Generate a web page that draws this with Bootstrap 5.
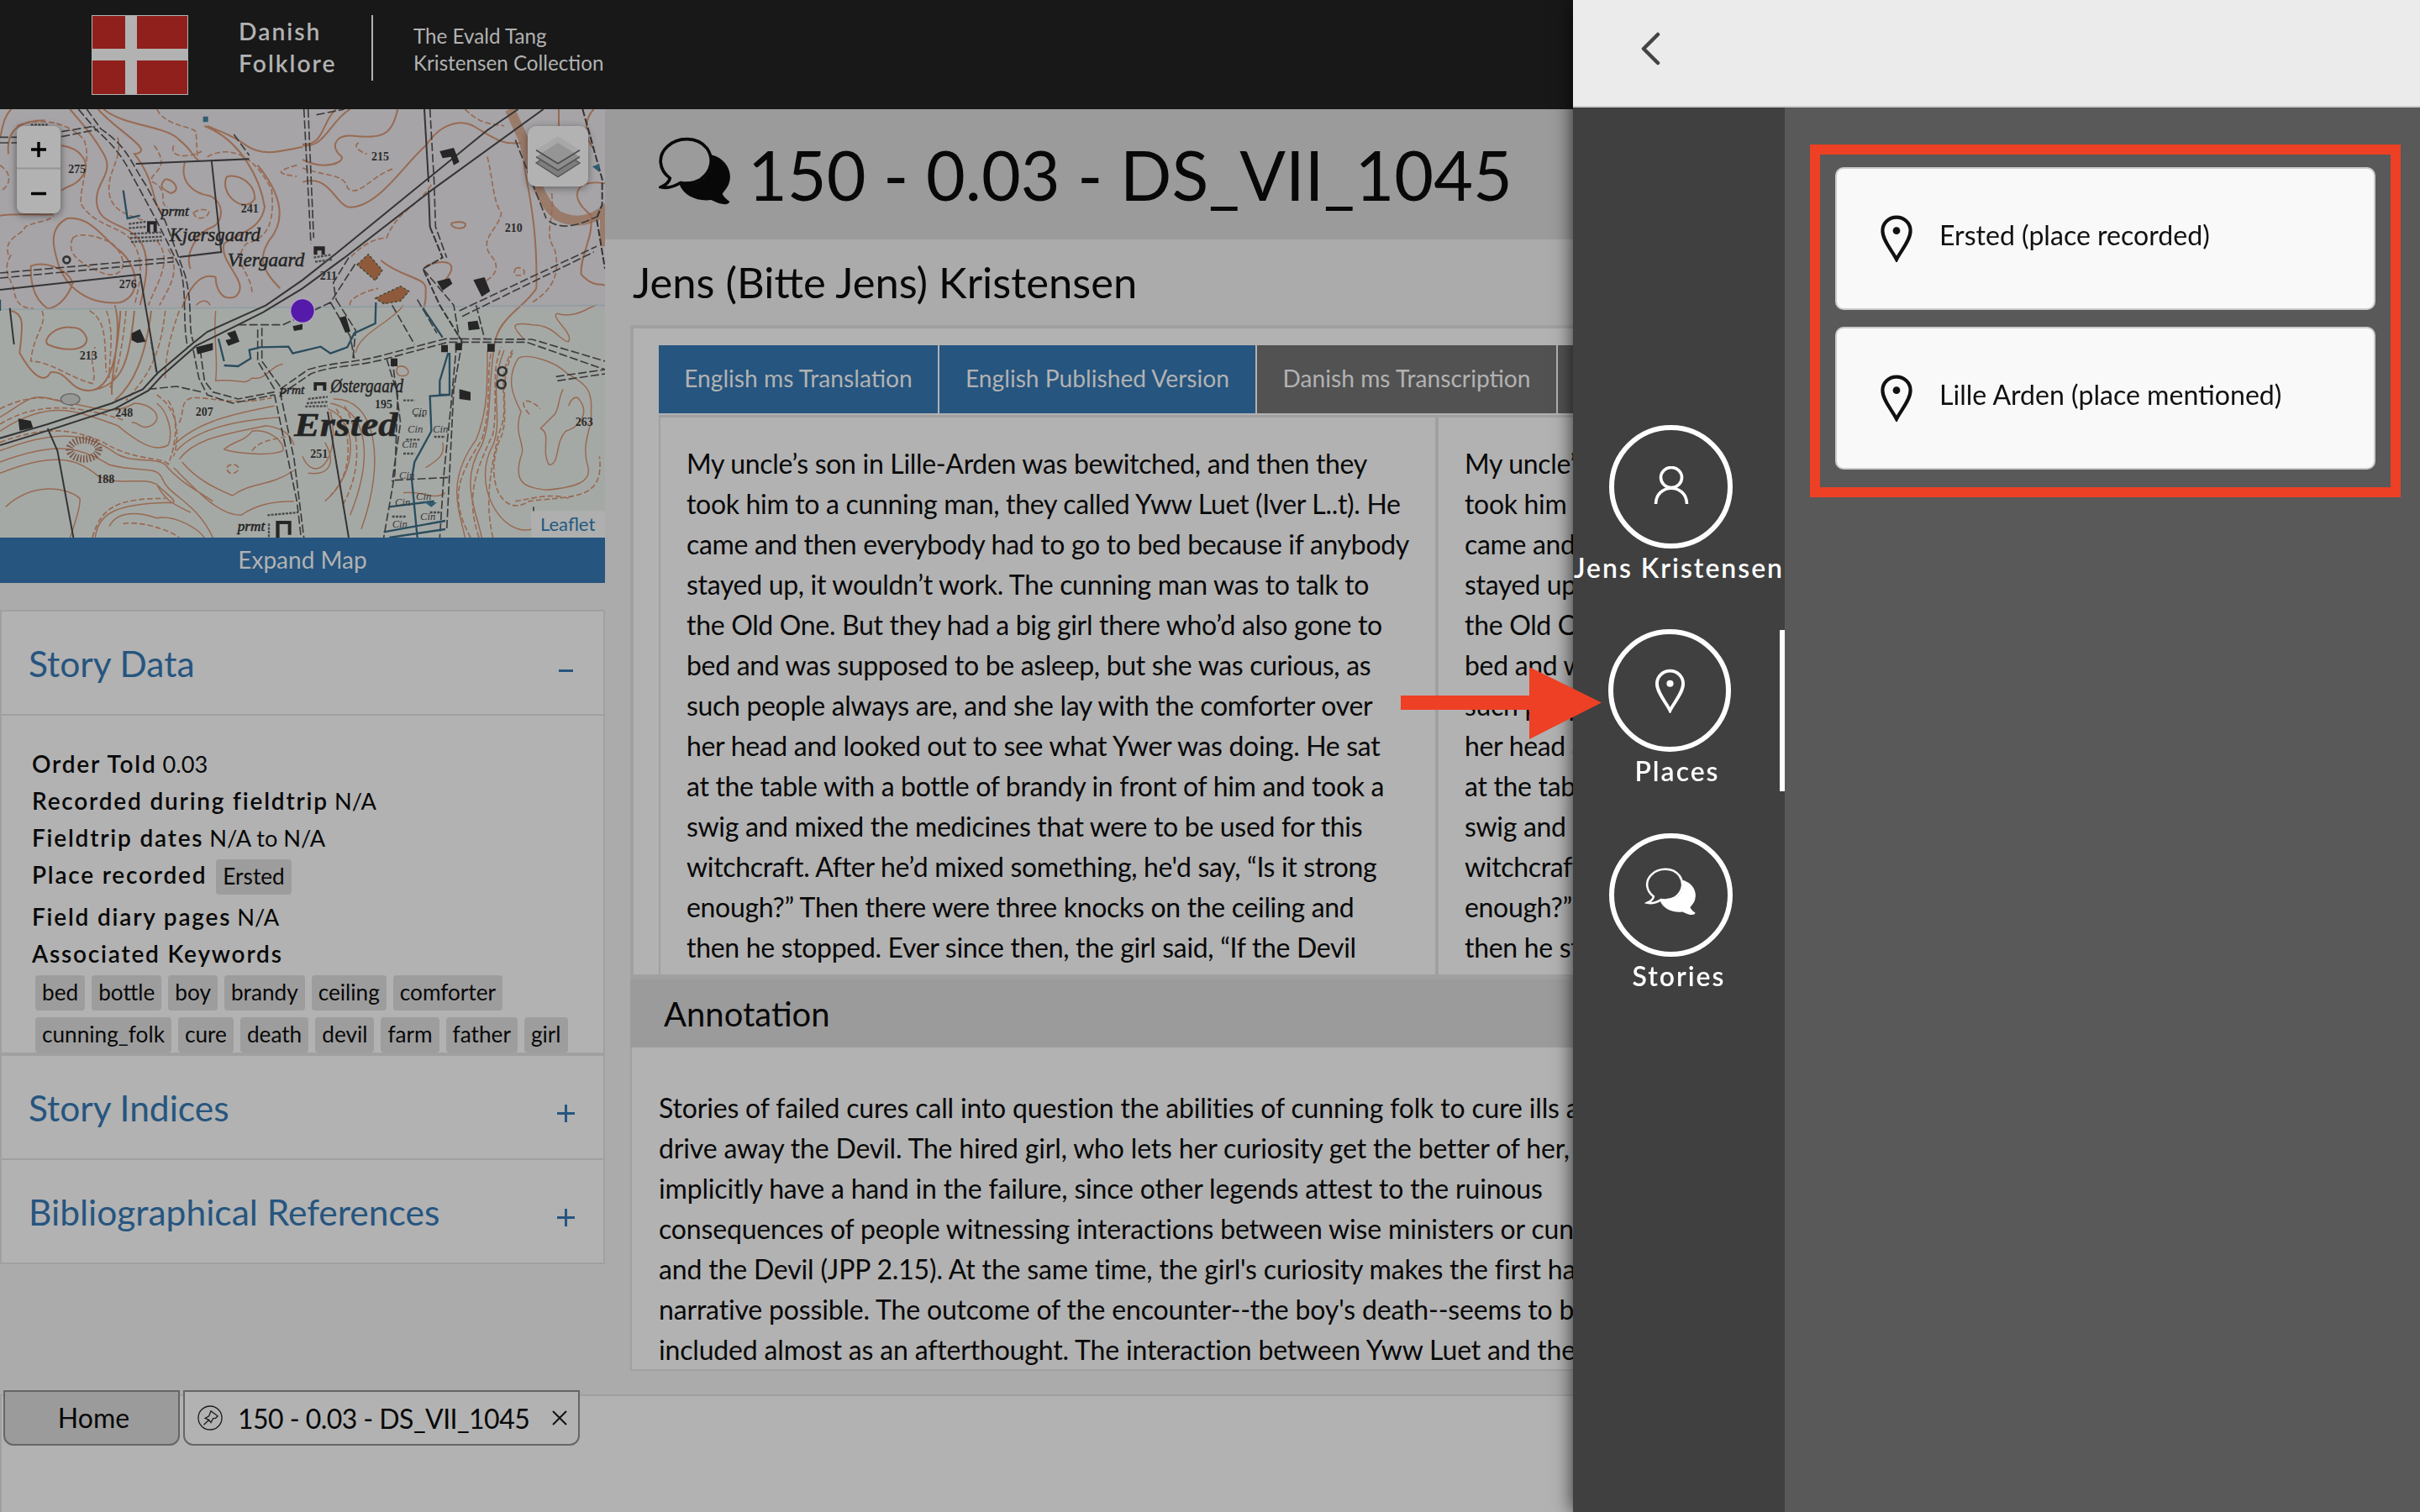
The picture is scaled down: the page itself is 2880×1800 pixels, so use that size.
<!DOCTYPE html>
<html lang="en">
<head>
<meta charset="utf-8">
<title>Danish Folklore</title>
<link href="https://cdn.jsdelivr.net/npm/bootstrap@5.3.0/dist/css/bootstrap.min.css" rel="stylesheet">
<style>
body{font-family:Lato,"Liberation Sans",sans-serif;font-size:32px;line-height:48px;color:#080808;background:#ababab;height:1800px;overflow:hidden;white-space:nowrap}
.ls{letter-spacing:2px;font-weight:600}
.topbar{height:130px;background:#181818;color:#b2b2b2}
.flag{width:115px;height:95px;margin:18px 60px 0 109px}
.brandname{font-size:28.300px;line-height:38px;padding-top:18px;width:158px}
.brandline{width:2px;height:78px;margin-top:18px;background:#b2b2b2}
.brandsub{font-size:24.200px;line-height:32px;margin-left:48px;padding-top:27px}
.workarea{height:1530px}
.leftcol{width:720px}
.mapbox{height:510px}
.expand{height:54px;background:#26557f;color:#b2b2b2;font-size:28px;line-height:52px}
.zoomctl{left:20px;top:20px;width:52px;height:104px;border-radius:8px;background:#b2b2b2;box-shadow:0 2px 10px rgba(0,0,0,.5)}
.layerctl{right:20px;top:20px;width:72px;height:72px;border-radius:10px;background:#b2b2b2;box-shadow:0 2px 10px rgba(0,0,0,.4)}
.leaf{right:0;bottom:0;width:88px;height:32px;background:rgba(178,178,178,.7);color:#1f5a80;font-size:22px;line-height:31px;padding-left:11px}
.panels{margin-top:32px;border:2px solid #a0a0a0;background:#b2b2b2}
.phead{height:122px;padding:0 33px 0 32px;color:#26557f;font-size:42.500px;line-height:124px}
.phead svg{margin-top:13px}
.pbody{border-top:2px solid #a0a0a0;border-bottom:4px solid #a0a0a0;height:407px;padding:35px 0 0 36px;font-size:27.200px;line-height:44px;overflow:hidden}
.pbody .ls{font-size:28px;letter-spacing:1.800px}
.pbody .fact{height:44px}
.pline{border-top:2px solid #a0a0a0;height:124px}
.chiprow{height:50px;margin-left:4px}
.chip{display:inline-block;background:#9d9d9d;border-radius:4px;font-size:26.200px;line-height:38px;height:42px;padding:1px 8px}
.titlebar{height:155px;background:#9b9b9b;padding:33px 0 0 64px;font-size:80.800px;line-height:89px}
.titlebar span{margin-left:19px}
.person{font-size:50.700px;line-height:60px;margin:21px 0 21px 33px}
.story{margin-left:30px;height:779px;border:4px solid #a0a0a0;border-bottom-width:6px;border-right:0;background:#b2b2b2;padding:20px 0 0 30px}
.stab{height:81px;background:#26557f;color:#b2b2b2;font-size:28.200px;line-height:79px;text-align:center;margin-right:2px}
.stab.off{background:#525252}
.scols{margin-top:2px;height:666px}
.scol{width:928px;border:2px solid #a0a0a0;border-width:3px 4px 0 2px;padding:31px 0 0 31px;flex:none;letter-spacing:-.32px}
.ahead{margin-left:30px;height:81px;background:#9b9b9b;padding-left:40px;font-size:40px;line-height:83px}
.abody{margin-left:30px;height:385px;border:2px solid #a0a0a0;border-top:0;background:#b2b2b2;padding:48px 0 0 32px;overflow:hidden;letter-spacing:-.17px}
.tabbar{height:140px;background:#b2b2b2;border:2px solid #a0a0a0;border-width:2px 0 0 2px;padding-left:2px;line-height:61px}
.wtab{height:66px;margin-top:-7px;border:2px solid #666;border-radius:0 0 12px 12px;background:#b2b2b2}
.wtab svg{flex:none}
.drawer.offcanvas{--bs-offcanvas-width:1008px;width:1008px;border:0;background:#595959;box-shadow:0 0 22px rgba(0,0,0,.75);color:#111;visibility:visible;transform:none;outline:0}
.dtop{height:128px;background:#ebebeb;border-bottom:2px solid #ccc;padding:38px 0 0 79px}
.rail{width:252px;background:#404040;color:#fff;padding-top:378px}
.ring{width:147px;height:147px;border:6px solid #fff;border-radius:50%;margin-left:43px}
.raillabel{font-size:31.900px;line-height:46px;text-align:center}
.ritem{height:243px}
.ritem.chosen .ring{width:146px;height:146px;margin-left:42px}
.ritem.chosen .raillabel{padding-right:4px}
.picked{width:6px;height:192px;right:0;top:1px;background:#fff}
.callout{width:703px;height:420px;margin:44px 0 0 30px;border:12px solid #ed4024;padding:15px 18px}
.place{height:170px;border:2px solid #ccc;border-radius:10px;background:#f9f9f9;margin-bottom:20px;padding-left:50px;font-size:32.100px}
.place span{margin-left:30px;padding-bottom:8px}
.arrow{left:1667px;top:794px;z-index:2000}
</style>
<script src="https://cdn.jsdelivr.net/npm/bootstrap@5.3.0/dist/js/bootstrap.bundle.min.js"></script>
</head>
<body>
<svg width="0" height="0" class="position-absolute">
<symbol id="bubbles" viewBox="40 40 262 250"><path d="M80 188C40 158 35 108 70 75C108 38 178 38 212 80C240 120 228 165 190 192C165 207 138 207 118 204C100 215 75 226 48 220C65 212 78 200 80 188Z" fill="none" stroke="currentColor" stroke-width="11"/><path d="M228 104C280 116 306 165 292 205C286 225 270 238 268 245C275 258 285 266 294 272C290 286 265 285 228 266C180 272 130 255 112 206C160 215 200 200 218 170C232 148 234 125 228 104Z" fill="currentColor"/></symbol>
<symbol id="pin" viewBox="0 0 38 54"><path d="M19 51C14 41 3 29 3 18a16 15.500 0 0 1 32 0C35 29 24 41 19 51Z" fill="none" stroke="currentColor" stroke-width="4"/><circle cx="19" cy="18" r="4.200" fill="currentColor"/></symbol>
</svg>
<header class="topbar d-flex">
<svg class="flag" viewBox="0 0 115 95"><rect width="115" height="95" fill="#b2b2b2"/><path d="M1 1h39v39H1zM54 1h60v39H54zM1 54h39v40H1zM54 54h60v40H54z" fill="#90201c"/></svg>
<div class="brandname ls">Danish<br>Folklore</div>
<div class="brandline"></div>
<div class="brandsub">The Evald Tang<br>Kristensen Collection</div>
</header>
<main class="workarea d-flex">
<aside class="leftcol flex-shrink-0">
<div class="mapbox position-relative overflow-hidden">
<svg width="720" height="510" viewBox="0 0 2160 1530" fill="none">
<rect width="2160" height="1530" fill="#a6a4a7"/><rect y="710" width="2160" height="820" fill="#a5a9a6"/>
<g stroke="#986a52" stroke-width="6">
<path d="M30 160C20 60 90 40 160 40M0 100C10 70 10 30 40 0M220 130C290 140 320 190 300 230C270 280 240 270 220 290M0 380C60 370 160 380 190 375M250 0C300 60 330 90 370 160C410 230 340 260 345 330C350 420 450 400 500 470C540 530 520 620 500 700M350 0C420 80 560 150 480 160C560 260 540 340 580 370M370 0C440 60 600 60 640 110C680 140 690 170 710 185M660 190C640 260 690 300 750 310C800 330 800 400 760 420C700 440 660 520 680 570M240 390C160 430 200 520 210 560C250 660 340 700 430 690C520 660 480 540 420 500C370 460 320 380 240 390ZM110 560C160 540 240 570 260 620C240 680 200 710 170 712C110 670 110 600 110 560ZM740 60C790 80 840 100 880 130C940 170 1000 150 1080 135M730 60C860 110 930 250 945 350C930 430 860 440 800 480C780 550 900 620 840 670C780 690 770 620 770 600C710 580 670 650 650 710M920 200C1010 310 1020 400 960 470C930 520 920 560 1000 640M810 240C780 300 870 380 910 320C910 270 860 230 810 240M590 250C560 280 590 290 610 300C650 290 620 250 590 250M1080 130C1160 140 1180 40 1250 0M1080 260C1180 230 1200 350 1250 350C1350 350 1440 200 1520 130C1580 40 1650 40 1690 60C1760 100 1790 130 1860 120M1080 180C1160 220 1230 190 1220 170C1180 140 1190 90 1260 95C1380 110 1400 80 1420 0M1080 125C1160 130 1150 40 1200 0M1870 190C1880 270 1920 400 1915 640C1880 700 1790 740 1770 820M2120 0C2080 40 2090 110 2120 140M1995 0V100M2160 265C2060 250 2040 300 2080 350L2110 380C2120 460 2070 520 2075 590C2120 640 2150 620 2160 630M1610 410C1620 400 1660 400 1662 412C1660 430 1620 430 1610 410M1360 540C1430 600 1520 600 1520 640C1520 680 1520 690 1510 720M1520 560C1600 530 1640 550 1590 610M260 780C200 770 150 820 170 840C240 870 310 860 310 820C300 790 280 780 260 780M40 720C90 730 80 780 70 870C120 960 160 980 180 940C240 930 250 1010 320 1005C400 1000 420 870 430 720M410 700C440 800 390 960 400 1020M480 720C460 900 440 990 320 1005M540 720C520 880 480 980 410 1040"/>
<path stroke-width="4.500" d="M0 1100C100 1040 110 1010 200 1040C330 1060 400 1100 480 1050C540 1050 590 1100 540 1130C500 1150 490 1110 470 1120M0 1150C180 1030 280 1080 420 1130C480 1180 550 1230 600 1200C620 1160 600 1080 560 1050M0 1220C180 1150 300 1150 400 1220C460 1270 560 1240 590 1270C640 1330 700 1360 760 1400M0 1260C190 1190 280 1200 390 1270C500 1300 560 1270 580 1320C600 1380 700 1400 760 1530M0 1300C200 1220 280 1250 350 1310C430 1350 500 1310 560 1340C590 1400 620 1410 680 1440M20 1420C120 1330 240 1350 285 1390C290 1420 260 1500 250 1530M340 1530C350 1440 420 1410 600 1405C650 1410 600 1380 560 1340M390 1490C420 1430 500 1440 560 1460C620 1450 700 1490 730 1530M640 1250C700 1170 820 1160 950 1130C1020 1140 1040 1170 1050 1200M620 1200C700 1120 820 1090 980 1060M630 1220C700 1140 850 1110 1000 1100M650 1260C700 1320 760 1350 830 1380C900 1330 960 1350 1050 1290M620 1280C700 1360 780 1450 860 1450C920 1410 980 1400 1050 1400M800 1215C840 1180 870 1190 900 1150C960 1140 1020 1190 1010 1220C970 1240 850 1230 800 1215Z"/>
<path stroke-width="4.500" d="M770 720C760 820 780 880 770 970C850 960 870 990 900 960C950 970 960 920 1010 910M700 700C720 680 740 680 750 700M1100 1300C1180 1310 1200 1260 1160 1190M1080 1240C1120 1340 1220 1260 1180 1080M1170 1070C1280 1110 1280 1300 1160 1400M1180 1050C1320 1080 1330 1250 1250 1450M1190 1035C1340 1030 1380 1250 1290 1500M1270 870C1280 800 1400 760 1440 700M1420 920C1450 910 1470 940 1450 950C1420 960 1410 940 1420 920M1770 820C1740 960 1760 1100 1720 1200C1640 1330 1700 1430 1720 1530M1740 860C1740 1000 1740 1080 1700 1180C1590 1330 1640 1430 1660 1530M1800 860C1740 1010 1800 1100 1760 1200C1680 1340 1790 1530 1900 1500M1850 890C1800 970 1840 1040 1860 1080C1830 1160 1880 1200 1860 1240C1830 1340 1880 1350 1950 1360C2060 1350 2110 1330 2100 1280C2070 1190 2120 1130 2110 1080C2120 980 2060 970 2020 940C1980 900 1880 870 1850 890M2010 1000C1990 1040 2000 1060 1980 1090L1930 1140C1970 1160 1930 1220 1960 1270C2000 1270 1980 1190 2020 1150C2080 1130 2100 1080 2070 1040C2060 1020 2040 1030 2030 1060M1870 820C1820 770 1830 760 1900 770C1980 770 2000 830 2030 830C2050 800 1960 740 1990 730C2060 750 2110 700 2130 700M1440 1370C1500 1360 1550 1400 1590 1370M1520 1280C1570 1250 1590 1230 1580 1190"/>
</g>
<g stroke="#986a52" stroke-width="5" stroke-dasharray="20 9">
<path d="M0 200C60 240 20 290 0 290M60 60C160 20 260 60 300 110C330 180 280 290 290 340C340 420 440 420 470 470C520 540 500 620 480 700M560 0C590 60 680 60 700 80L705 180M420 100C440 180 380 220 390 300C400 370 470 380 520 400M550 130C620 220 520 230 545 260C610 290 560 340 600 350M260 460C230 520 300 560 380 590C460 600 450 520 400 480C350 450 280 440 260 460ZM30 520C10 460 80 450 90 420C130 400 180 400 190 380M40 520C0 580 50 620 50 650C60 700 80 710 120 712M620 130C600 180 690 170 720 150M740 170C830 120 920 180 970 290C980 400 960 460 880 480C820 550 900 580 900 660M1060 200C990 220 980 230 1060 240M690 370C720 350 750 360 745 370C740 390 700 400 690 370M1280 120C1260 130 1280 150 1310 160M1080 210C1160 240 1230 230 1240 280C1280 320 1320 240 1410 210M1660 0C1720 60 1760 50 1800 60M1740 170C1760 250 1760 330 1790 370C1780 430 1710 460 1750 520C1790 560 1770 600 1720 620M1970 300C1980 400 1940 440 1980 500C2000 580 1980 640 1900 690M1540 270C1480 360 1420 360 1380 460C1340 460 1300 480 1250 530M1840 570C1850 560 1880 570 1870 590C1840 600 1830 590 1840 570M150 720C170 770 120 800 110 900C180 900 250 960 330 980C350 940 310 890 340 850M320 720C390 760 370 860 380 940M380 720C410 800 390 880 390 960M450 720C440 830 420 950 390 1000M590 720C570 900 520 960 450 1040M640 720C600 830 590 900 590 960M560 470C620 540 560 620 530 700M600 500C650 580 600 640 570 700"/>
<path d="M0 1070C100 1020 180 1020 260 1060M0 1190C160 1130 260 1140 370 1190C480 1260 590 1240 600 1270M0 1125C120 1050 260 1050 440 1110M330 1530C360 1420 420 1390 590 1390M440 1480C500 1470 600 1500 640 1530M600 1040C640 1090 630 1200 600 1270M560 1020C620 1060 650 1140 620 1240M640 1120C660 1080 640 1040 690 1030C760 1030 850 1060 970 1030M900 1220C920 1190 960 1180 1020 1170M810 1280C820 1260 860 1270 850 1290C830 1310 810 1300 810 1280M1680 1530C1600 1380 1640 1310 1720 1180C1760 1050 1730 950 1760 840M1710 1530C1660 1380 1700 1290 1760 1160C1780 1040 1750 940 1790 850M1760 1530C1730 1400 1750 1300 1780 1160C1830 1050 1760 980 1830 860M1840 1400C1900 1390 1970 1370 2030 1390M1830 870C1770 1000 1830 1100 1780 1190C1730 1340 1800 1460 1890 1400C2040 1380 2160 1400 2140 1240M1890 1090C1840 1030 1890 1030 1930 1070M1200 1070C1260 1160 1260 1300 1180 1380M1230 1060C1290 1160 1290 1300 1220 1420M1250 700C1240 680 1300 650 1350 640"/>
</g>
<path d="M1820 0L1870 110C1900 240 1930 330 1990 380C2050 410 2110 400 2160 360V490" stroke="#966a50" stroke-width="36" opacity=".7"/>
<path d="M1275 555L1315 518L1365 575L1340 612ZM1340 675L1430 632L1460 650L1430 685L1370 695Z" fill="#8f5a3c" stroke="#443" stroke-width="4" stroke-dasharray="10 6"/>
<path d="M0 715L2160 700" stroke="#8a9ca0" stroke-width="4"/>
<g stroke="#343434" stroke-width="6">
<path d="M0 1175L170 1125L400 1050L510 1000L560 945L690 835L740 795L950 700L1080 610L1200 515L1740 75L1850 0M0 1200L180 1145L410 1070L530 1005L580 950L700 845L940 725L1080 640L1230 530L1540 290L1940 0M485 195L890 178M755 180L790 510L640 528M500 590L560 940M0 645L500 590M170 1140L205 1220L262 1530M35 710L50 840M1170 1080L1245 1530M1515 0L1530 260M1530 290L1535 420"/>
<path d="M1535 420L1580 530L1510 570L1570 700L1650 830M2080 0L2150 250V340L2130 390L2160 570" stroke-dasharray="26 8"/>
</g>
<g stroke="#3c3c3c" stroke-width="5" stroke-dasharray="30 10">
<path d="M280 0L340 70C440 160 450 200 490 270L560 400L640 560C670 640 650 760 670 850M310 0L360 70C460 140 460 180 520 270L590 400L660 590C690 700 670 780 690 830M0 585L620 530M0 603L620 545M0 100H60M0 120H60M220 80L340 60M220 98L350 72M1085 0L1110 480M1100 0L1120 460M1535 0L1550 260L1555 420L1595 530M690 860L710 960L740 1020L830 1050L980 1020M715 860L730 970L760 1010L850 1035L980 1010M530 1000L630 990L720 1010M980 1020L1060 1400L1075 1530M1000 1010L1050 1250L1085 1530M980 1000L920 900V780M1000 990L935 900V780M850 770L1010 770L1180 690L1270 550M1000 1000L1100 930C1200 900 1260 910 1400 870L1590 820L1900 822L2160 900M1000 1020L1110 945C1200 910 1270 925 1420 880L1600 832H1880L2160 930M1180 690L1250 810L1265 890M1200 680L1270 790L1260 890M1245 530L1190 620L1200 680M1650 830L1620 1000L1595 1500M1630 840L1610 1060L1585 1300L1570 1530M1640 720L2130 490M1650 740L2120 510M1700 700L1730 820M1510 570L1620 700L1640 820M1380 890L1420 1020L1410 1300L1370 1530M1400 890L1430 1120L1400 1330M1985 955L2160 930M1990 970L2160 945M1410 1325L1600 1315M1490 680L1560 800M1400 700L1480 840M1130 20L1230 0M1840 110L1950 390M1960 400C2020 440 2090 400 2130 385M835 90L890 165M540 830L560 950M1905 1440V1420"/>
</g>
<path d="M440 290L455 390L500 380M800 915L850 918L895 890L890 860L930 850L1030 848L1045 872L1145 848L1180 872L1240 850L1265 800L1340 765L1342 690M1510 710L1580 815M1600 870L1570 970V1020H1605V870M1605 1020L1535 1025L1540 1150L1480 1260L1470 1320L1490 1530M1390 1420L1550 1400M1370 1510L1590 1470M1390 1530L1590 1500M0 680V720M780 820L800 900" stroke="#2a4d5e" stroke-width="7"/>
<path d="M525 400h35v40h-12v-28h-12v28h-11zM470 800l30-15 20 45-30 5-20-10zM810 800l30-10 15 40-40 15-10-20 20-5zM700 850l60-15v25l-55 15zM1120 490h40v30h-12v-15h-15v15h-13zM1570 150l50-12 20 50-20 12-10-30-30 5zM1560 615l45-12 10 20-35 25zM1690 610l40-10 20 50-30 20zM1670 760l35-5 8 30-40 5zM1575 842h24v26h-24zM1625 835h24v26h-24zM1740 838h26v28h-26zM1210 745l25-6 16 55-18 4zM1640 1000l40 10v30l-40-5zM985 1470h55v50h-12v-38h-30v48h-13zM1120 975h45v30h-12v-18h-22v18h-11zM65 1105l45 8 8 25-48 10zM1395 890h24v28h-24zM1045 775l35-8v20l-30 5z" fill="#262626"/>
<path d="M460 410l60-8M460 425l60-5M465 445l110-5M465 460l115-5M468 474l110-6M1100 1035l70-8M1095 1050l75-5M1090 1062l80-2M1120 530l60-10M1125 545l60-8M955 1450l110-10M960 1480v50M1440 1040h40M1450 1180h50M1440 1230h40M1550 1170h40M1535 1440h40M1400 1455h50M1480 1095h40M110 55h60" stroke="#4a4a4a" stroke-width="7" stroke-dasharray="9 4"/>
<ellipse cx="251" cy="1036" rx="34" ry="20" fill="#969896" stroke="#666" stroke-width="4"/>
<ellipse cx="300" cy="1215" rx="52" ry="34" stroke="#7a5848" stroke-width="26" stroke-dasharray="5 6"/>
<g stroke="#333" stroke-width="8"><circle cx="238" cy="538" r="12"/><circle cx="1793" cy="936" r="15"/><circle cx="1790" cy="982" r="15"/></g>
<path d="M725 26h18v20h-18zM1510 1400l50 5-20 16zM2115 205l25-10v30z" fill="#2f5c70"/>
<g fill="#242424" stroke="#242424" stroke-width="1.500" font-family="Liberation Serif,serif" font-style="italic" font-size="68">
<text x="605" y="470" textLength="325" lengthAdjust="spacingAndGlyphs">Kjærsgaard</text><text x="812" y="562" textLength="275" lengthAdjust="spacingAndGlyphs">Viergaard</text><text x="1180" y="1012" textLength="260" lengthAdjust="spacingAndGlyphs" dx="0">Østergaard</text>
<text x="575" y="380" font-size="48" textLength="100" lengthAdjust="spacingAndGlyphs">prmt</text><text x="848" y="1506" font-size="48" textLength="98" lengthAdjust="spacingAndGlyphs">prmt</text><text x="1000" y="1018" font-size="46">prmt</text>
<text x="1050" y="1166" font-size="122" font-weight="bold" textLength="370" lengthAdjust="spacingAndGlyphs">Ersted</text></g>
<g fill="#2c2c2c" font-family="Liberation Serif,serif" font-weight="bold" font-size="42"><text x="244" y="228">275</text><text x="860" y="370">241</text><text x="425" y="640">276</text><text x="284" y="893">213</text><text x="412" y="1097">248</text><text x="698" y="1096">207</text><text x="346" y="1336">188</text><text x="1326" y="184">215</text><text x="1802" y="438">210</text><text x="1142" y="610">211</text><text x="1338" y="1068">195</text><text x="1108" y="1246">251</text><text x="2054" y="1132">263</text></g>
<g font-family="Liberation Serif,serif" font-style="italic" font-size="38" fill="#3a3a3a"><text x="1470" y="1092">Cin</text><text x="1455" y="1155">Cin</text><text x="1545" y="1155">Cin</text><text x="1435" y="1210">Cin</text><text x="1425" y="1320">Cin</text><text x="1485" y="1395">Cin</text><text x="1410" y="1415">Cin</text><text x="1500" y="1468">Cin</text><text x="1400" y="1495">Cin</text></g>
<circle cx="1080" cy="720" r="43" fill="#551aa9" stroke="#b5a8c4" stroke-width="4"/>
</svg>
<div class="zoomctl position-absolute"><svg width="52" height="104" viewBox="0 0 52 104" class="d-block"><path d="M0 50.500h52" stroke="#949494" stroke-width="2"/><path d="M17 28h18M26 19v18M17 80.500h18" stroke="#000" stroke-width="3.400"/></svg></div>
<div class="layerctl position-absolute"><svg width="72" height="72" viewBox="804 60 216 216" class="d-block"><path d="M834 192l78 50 78-50-78-50z" fill="#7e7e7e" stroke="#555" stroke-width="4"/><path d="M834 170l78 47 78-47-78-50z" fill="#8d8d8d"/><path d="M834 170l78 48 78-48" fill="none" stroke="#555" stroke-width="5"/><path d="M912 96l78 50-78 48-78-48z" fill="#a8a8a8"/><path d="M912 120l58 36-58 37-58-37z" fill="#959595"/><path d="M834 146l78 48 78-48" fill="none" stroke="#4c4c4c" stroke-width="5"/></svg></div>
<div class="leaf position-absolute">Leaflet</div>
</div>
<div class="expand text-center">Expand Map</div>
<div class="panels">
<div class="phead d-flex justify-content-between"><span>Story Data</span><svg width="22" height="100"><path d="M2 57.500h17" stroke="#26557f" stroke-width="3"/></svg></div>
<div class="pbody">
<div class="fact"><span class="ls">Order Told</span> 0.03</div>
<div class="fact"><span class="ls">Recorded during fieldtrip</span> N/A</div>
<div class="fact"><span class="ls">Fieldtrip dates</span> N/A to N/A</div>
<div class="d-flex" style="height:50px"><span class="ls">Place recorded</span><span class="chip mt-1" style="margin-left:11px">Ersted</span></div>
<div class="fact"><span class="ls">Field diary pages</span> N/A</div>
<div class="fact mb-1"><span class="ls">Associated Keywords</span></div>
<div class="chiprow d-flex gap-2"><span class="chip">bed</span><span class="chip">bottle</span><span class="chip">boy</span><span class="chip">brandy</span><span class="chip">ceiling</span><span class="chip">comforter</span></div>
<div class="chiprow d-flex gap-2"><span class="chip">cunning_folk</span><span class="chip">cure</span><span class="chip">death</span><span class="chip">devil</span><span class="chip">farm</span><span class="chip">father</span><span class="chip">girl</span></div>
</div>
<div class="phead d-flex justify-content-between"><span>Story Indices</span><svg width="22" height="100"><path d="M0 55.500h21M10.500 45v21" stroke="#26557f" stroke-width="3"/></svg></div>
<div class="phead pline d-flex justify-content-between"><span>Bibliographical References</span><svg width="22" height="100"><path d="M0 55.500h21M10.500 45v21" stroke="#26557f" stroke-width="3"/></svg></div>
</div>
</aside>
<section class="flex-grow-1 overflow-hidden">
<div class="titlebar d-flex"><svg width="87" height="83"><use href="#bubbles"/></svg><span>150 - 0.03 - DS_VII_1045</span></div>
<div class="person">Jens (Bitte Jens) Kristensen</div>
<div class="story">
<div class="d-flex"><div class="stab" style="width:332px">English ms Translation</div><div class="stab" style="width:376px">English Published Version</div><div class="stab off" style="width:356px">Danish ms Transcription</div><div class="stab off" style="width:400px"></div></div>
<div class="scols d-flex">
<div class="scol">My uncle’s son in Lille-Arden was bewitched, and then they<br>took him to a cunning man, they called Yww Luet (Iver L..t). He<br>came and then everybody had to go to bed because if anybody<br>stayed up, it wouldn’t work. The cunning man was to talk to<br>the Old One. But they had a big girl there who’d also gone to<br>bed and was supposed to be asleep, but she was curious, as<br>such people always are, and she lay with the comforter over<br>her head and looked out to see what Ywer was doing. He sat<br>at the table with a bottle of brandy in front of him and took a<br>swig and mixed the medicines that were to be used for this<br>witchcraft. After he’d mixed something, he'd say, “Is it strong<br>enough?” Then there were three knocks on the ceiling and<br>then he stopped. Ever since then, the girl said, “If the Devil</div>
<div class="scol border-start-0">My uncle’s son in<br>took him to a<br>came and then<br>stayed up, it<br>the Old One. But<br>bed and was<br>such people<br>her head and<br>at the table<br>swig and mixed<br>witchcraft. After<br>enough?” Then<br>then he stopped.</div>
</div>
</div>
<div class="ahead">Annotation</div>
<div class="abody">Stories of failed cures call into question the abilities of cunning folk to cure ills and<br>drive away the Devil. The hired girl, who lets her curiosity get the better of her,<br>implicitly have a hand in the failure, since other legends attest to the ruinous<br>consequences of people witnessing interactions between wise ministers or cunning<br>and the Devil (JPP 2.15). At the same time, the girl's curiosity makes the first half<br>narrative possible. The outcome of the encounter--the boy's death--seems to be<br>included almost as an afterthought. The interaction between Yww Luet and the</div>
</section>
</main>
<footer class="tabbar d-flex">
<div class="wtab text-center" style="width:210px;background:#9b9b9b;padding-left:5px">Home</div>
<div class="wtab ms-1 d-flex align-items-center" style="width:472px"><svg width="30" height="30" viewBox="29 67 92 92" style="margin-left:15px"><g fill="none" stroke="#1c1c1c" stroke-width="4"><circle cx="75" cy="113" r="43"/><path d="M78 88l25 18-8 8-9 1-8 15-7-10-14-6 14-8zM71 120L52 138"/></g></svg><span style="margin-left:18px;letter-spacing:-.55px">150 - 0.03 - DS_VII_1045</span><svg width="18" height="18" style="margin-left:27px"><path d="M1 1l16 16M17 1L1 17" stroke="#111" stroke-width="2"/></svg></div>
</footer>
<div class="drawer offcanvas offcanvas-end show" data-bs-backdrop="false" data-bs-scroll="true" tabindex="-1">
<div class="dtop"><svg class="d-block" width="26" height="40"><path d="M22 3L5 20l17 17" fill="none" stroke="#444" stroke-width="4.500" stroke-linecap="round" stroke-linejoin="round"/></svg></div>
<div class="d-flex flex-grow-1">
<nav class="rail">
<div class="ritem"><div class="ring d-flex align-items-center justify-content-center"><svg width="42" height="46" viewBox="0 0 42 46" fill="none" stroke="#fff" stroke-width="3.600" style="margin-top:-4px"><ellipse cx="21" cy="13.500" rx="12.500" ry="12"/><path d="M2.500 45C3 20 39 20 39.500 45"/></svg></div><div class="raillabel ls">Jens Kristensen</div></div>
<div class="ritem chosen position-relative"><div class="ring d-flex align-items-center justify-content-center text-white"><svg width="37" height="53"><use href="#pin"/></svg></div><div class="raillabel ls">Places</div><div class="picked position-absolute"></div></div>
<div class="ritem"><div class="ring d-flex align-items-center justify-content-center text-white"><svg width="64" height="58" style="margin-top:-8px"><use href="#bubbles"/></svg></div><div class="raillabel ls">Stories</div></div>
</nav>
<div class="callout">
<div class="place d-flex align-items-center"><svg width="42" height="56"><use href="#pin"/></svg><span>Ersted (place recorded)</span></div>
<div class="place d-flex align-items-center"><svg width="42" height="56"><use href="#pin"/></svg><span>Lille Arden (place mentioned)</span></div>
</div>
</div>
</div>
<svg class="arrow position-absolute" width="240" height="86"><path d="M0 34H153V0L239 42.500 153 86V51H0Z" fill="#ed4024"/></svg>
</body>
</html>
